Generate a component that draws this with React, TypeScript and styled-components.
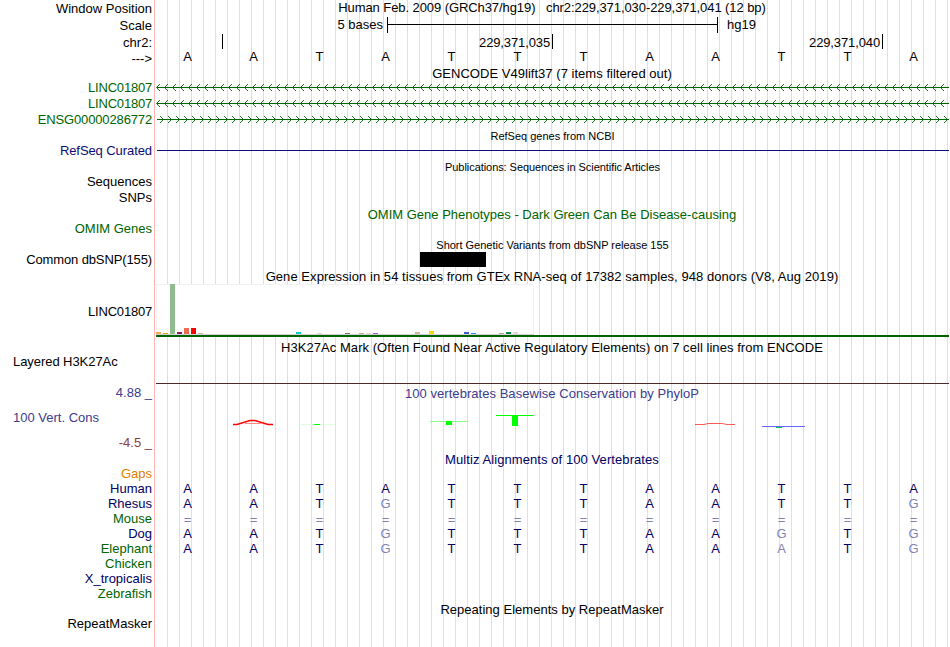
import React from "react";
import styled, { createGlobalStyle } from "styled-components";

const GlobalStyle = createGlobalStyle`
  body {
    margin: 0;
    background: #fff;
  }
`;

const Browser = styled.main`
  width: 949px;
  height: 647px;
  overflow: hidden;
  font: 13px/16px "Liberation Sans", Arial, sans-serif;
  color: #000;
  white-space: pre;
`;

const Row = styled.div<{ $h: number }>`
  display: grid;
  grid-template-columns: 156px 793px;
  height: ${({ $h }) => $h}px;
`;

const Side = styled.div<{ $pad?: number }>`
  box-sizing: border-box;
  width: 155px;
  padding: ${({ $pad = 0 }) => $pad}px 2px 0 0;
  border-right: 1px solid #ffb4b4;
`;

const Label = styled.div<{
  $color?: string;
  $left?: boolean;
  $gap?: number;
  $spacing?: number;
}>`
  color: ${({ $color = "#000" }) => $color};
  text-align: ${({ $left }) => ($left ? "left" : "right")};
  padding-left: ${({ $left }) => ($left ? 13 : 0)}px;
  margin-bottom: ${({ $gap = 0 }) => $gap}px;
  letter-spacing: ${({ $spacing = 0 }) => $spacing}px;
`;

const Track = styled.div`
  min-width: 0;
  background: repeating-linear-gradient(
    to right,
    transparent 0 11px,
    #dcdcf5 11px 12px
  );
`;

const Title = styled.div<{
  $color?: string;
  $small?: boolean;
  $pad?: number;
  $spacing?: number;
}>`
  padding: ${({ $pad = 0 }) => $pad}px ${({ $small }) => ($small ? 0 : 1)}px 0 0;
  text-align: center;
  color: ${({ $color = "#000" }) => $color};
  font-size: ${({ $small }) => ($small ? 11 : 13)}px;
  letter-spacing: ${({ $spacing = 0 }) => $spacing}px;
`;

const ScaleLine = styled.div`
  display: flex;
  height: 16px;
`;

const ScaleText = styled.span`
  width: 227px;
  text-align: right;
  margin-right: 4px;
`;

const ScaleBar = styled.span`
  box-sizing: border-box;
  width: 331px;
  height: 16px;
  margin-right: 9px;
  border: solid #000;
  border-width: 0 1px;
  background: linear-gradient(#000, #000) 0 7px / 100% 1px no-repeat;
`;

const Ruler = styled.div`
  display: flex;
  height: 15px;
  letter-spacing: -0.12px;
`;

const RulerCell = styled.span<{ $w: number }>`
  box-sizing: border-box;
  width: ${({ $w }) => $w}px;
  padding: 1px 2px 0 0;
  text-align: right;
  border-right: 1px solid #000;
`;

const Bases = styled.div`
  display: flex;
  margin-left: -1.5px;
`;

const Base = styled.span<{ $color: string; $down?: boolean }>`
  width: 66px;
  flex: none;
  text-align: center;
  color: ${({ $color }) => $color};
  padding-top: ${({ $down }) => ($down ? 1 : 0)}px;
`;

const SolidLine = styled.div<{ $top: number; $color: string; $left?: number }>`
  height: 1px;
  margin-left: ${({ $left = 0 }) => $left}px;
  background: ${({ $color }) => $color};
  transform: translateY(${({ $top }) => $top}px);
`;

const Drawing = styled.svg`
  display: block;
  overflow: hidden;
`;

const Variant = styled.div`
  width: 66px;
  height: 15px;
  margin-left: 264px;
  background: #000;
`;

const Expression = styled.div`
  height: 51px;
  border-bottom: 2px solid #006400;
`;

const BarBox = styled.div`
  box-sizing: border-box;
  display: flex;
  align-items: flex-end;
  gap: 2px;
  width: 378px;
  height: 51px;
  background: #fff;
  border-bottom: 1px solid #d2d2d2;
  box-shadow: inset 1px 1px #f2f2f2, inset -1px 0 #f2f2f2;
`;

const Bar = styled.span`
  flex: none;
  width: 5px;
`;

const NAVY = "#000064";
const GREEN = "#006400";
const FADED = "#8282b4";
const BLUE = "#3c3c8c";

const tissues: Record<number, [number, string]> = {
  0: [2, "#ffa54f"],
  1: [1, "#ee9a00"],
  2: [50, "#8fbc8f"],
  3: [2, "#8b1c62"],
  4: [6, "#ee6a50"],
  5: [6, "#ff0000"],
  6: [1, "#cdb79e"],
  20: [2, "#00cdcd"],
  23: [1, "#e0d5d2"],
  27: [1, "#8b7355"],
  29: [1, "#cdaa7d"],
  30: [1, "#eed5d2"],
  31: [1, "#b452cd"],
  37: [2, "#cdb79e"],
  39: [3, "#ffd700"],
  44: [2, "#3a5fcd"],
  45: [1, "#1e90ff"],
  49: [1, "#a6a6a6"],
  50: [2, "#008b45"],
  51: [2, "#eed5d2"],
};

const species = [
  { name: "Human", color: NAVY, bases: "AATATTTAATTA" },
  { name: "Rhesus", color: NAVY, bases: "AATGTTTAATTG" },
  { name: "Mouse", color: GREEN, bases: "============" },
  { name: "Dog", color: NAVY, bases: "AATGTTTAAGTG" },
  { name: "Elephant", color: GREEN, bases: "AATGTTTAAATG" },
  { name: "Chicken", color: GREEN, bases: "" },
  { name: "X_tropicalis", color: NAVY, bases: "" },
  { name: "Zebrafish", color: GREEN, bases: "" },
];

const reference = species[0].bases;

const TitleRow = ({ h, children, ...rest }) => (
  <Row $h={h}>
    <Side />
    <Track>
      <Title {...rest}>{children}</Title>
    </Track>
  </Row>
);

const LabelRow = ({ h, label, color = "#000", pad = 0, spacing = 0, children = null }) => (
  <Row $h={h}>
    <Side $pad={pad}>
      <Label $color={color} $spacing={spacing}>
        {label}
      </Label>
    </Side>
    <Track>{children}</Track>
  </Row>
);

const Gene = ({ reverse = false }) => {
  const arrows = Array.from({ length: 99 }, (_, i) =>
    reverse ? `M${i * 8 + 4} 4l3.5 3.5l-3.5 3.5` : `M${i * 8 + 4} 4l-3.5 3.5l3.5 3.5`
  ).join("");
  return (
    <Drawing width="793" height="16">
      <path d={arrows} fill="none" stroke={GREEN} strokeWidth=".9" />
      <rect x="1" y="7" width="792" height="1" fill={GREEN} />
    </Drawing>
  );
};

const Conservation = () => (
  <Drawing width="793" height="30" viewBox="156 402 793 30">
    <path d="M233 424.5H237L250 420.5H255L268 424.5H273" fill="none" stroke="#f00" strokeWidth="1.4" />
    <rect x="245" y="423" width="16" height="1" fill="#f88" />
    <rect x="299" y="424" width="36" height="1" fill="#dfd" />
    <rect x="314" y="424" width="6" height="1" fill="#0f0" />
    <rect x="430" y="421" width="38" height="1" fill="#8f8" />
    <rect x="446" y="421" width="6" height="4" fill="#0f0" />
    <rect x="496" y="415" width="38" height="1" fill="#0f0" />
    <rect x="512" y="415" width="6" height="11" fill="#0f0" />
    <path d="M695 424.5H704L708 423.5H722L727 424.5H735" fill="none" stroke="#f00" strokeOpacity=".65" />
    <path d="M762 426.5H805" stroke="#66f" />
    <rect x="776" y="427" width="6" height="1" fill="#0c3" />
  </Drawing>
);

const App = () => (
  <>
    <GlobalStyle />
    <Browser>
      <Row $h={17}>
        <Side $pad={1}>
          <Label>Window Position</Label>
        </Side>
        <Track>
          <Title $spacing={-0.08}>
            {"Human Feb. 2009 (GRCh37/hg19)   chr2:229,371,030-229,371,041 (12 bp)"}
          </Title>
        </Track>
      </Row>
      <LabelRow h={17} pad={1} label="Scale">
        <ScaleLine>
          <ScaleText>5 bases</ScaleText>
          <ScaleBar />
          <span>hg19</span>
        </ScaleLine>
      </LabelRow>
      <LabelRow h={15} pad={1} label="chr2:">
        <Ruler>
          <RulerCell $w={67} />
          <RulerCell $w={330}>229,371,035</RulerCell>
          <RulerCell $w={330}>229,371,040</RulerCell>
        </Ruler>
      </LabelRow>
      <LabelRow h={17} pad={2} label="--->">
        <Bases>
          {reference.split("").map((base, i) => (
            <Base key={i} $color="#000">
              {base}
            </Base>
          ))}
        </Bases>
      </LabelRow>

      <TitleRow h={14} $spacing={0.03}>GENCODE V49lift37 (7 items filtered out)</TitleRow>
      <LabelRow h={16} label="LINC01807" color={GREEN} spacing={-0.2}>
        <Gene />
      </LabelRow>
      <LabelRow h={16} label="LINC01807" color={GREEN} spacing={-0.2}>
        <Gene />
      </LabelRow>
      <LabelRow h={16} label="ENSG00000286772" color={GREEN} spacing={-0.14}>
        <Gene reverse />
      </LabelRow>

      <TitleRow h={15} $small>RefSeq genes from NCBI</TitleRow>
      <LabelRow h={16} label="RefSeq Curated" color="#0c0c78" spacing={-0.08}>
        <SolidLine $top={7} $left={1} $color="#0c0c78" />
      </LabelRow>

      <TitleRow h={15} $small $spacing={-0.06}>
        Publications: Sequences in Scientific Articles
      </TitleRow>
      <LabelRow h={16} label="Sequences" />
      <LabelRow h={16} label="SNPs" />

      <TitleRow h={15} $pad={1} $color={GREEN}>
        OMIM Gene Phenotypes - Dark Green Can Be Disease-causing
      </TitleRow>
      <LabelRow h={16} label="OMIM Genes" color={GREEN} />

      <TitleRow h={15} $small $spacing={-0.02}>
        Short Genetic Variants from dbSNP release 155
      </TitleRow>
      <LabelRow h={16} label="Common dbSNP(155)" spacing={-0.12}>
        <Variant />
      </LabelRow>

      <TitleRow h={16} $pad={1} $spacing={0.06}>
        Gene Expression in 54 tissues from GTEx RNA-seq of 17382 samples, 948 donors (V8, Aug 2019)
      </TitleRow>
      <LabelRow h={54} pad={20} label="LINC01807" spacing={-0.2}>
        <Expression>
          <BarBox>
            {Array.from({ length: 54 }, (_, i) => {
              const [height, background] = tissues[i] || [0, "none"];
              return <Bar key={i} style={{ height, background }} />;
            })}
          </BarBox>
        </Expression>
      </LabelRow>

      <TitleRow h={16} $pad={2} $spacing={0.05}>
        H3K27Ac Mark (Often Found Near Active Regulatory Elements) on 7 cell lines from ENCODE
      </TitleRow>
      <Row $h={31}>
        <Side>
          <Label $left $spacing={-0.06}>Layered H3K27Ac</Label>
        </Side>
        <Track>
          <SolidLine $top={29} $color="#502828" />
        </Track>
      </Row>

      <Row $h={67}>
        <Side>
          <Label $color={BLUE} $gap={9}>4.88 _</Label>
          <Label $color={BLUE} $gap={9} $left>100 Vert. Cons</Label>
          <Label $color="#8c3c3c">-4.5 _</Label>
        </Side>
        <Track>
          <Title $pad={1} $color={BLUE} $spacing={0.04}>
            100 vertebrates Basewise Conservation by PhyloP
          </Title>
          <Conservation />
        </Track>
      </Row>

      <TitleRow h={14} $color={NAVY} $spacing={0.08}>Multiz Alignments of 100 Vertebrates</TitleRow>
      <LabelRow h={15} label="Gaps" color="#e08000" />
      {species.map(({ name, color, bases }) => (
        <LabelRow key={name} h={15} label={name} color={color}>
          <Bases>
            {bases.split("").map((base, i) => (
              <Base
                key={i}
                $color={base === reference[i] ? NAVY : FADED}
                $down={base === "="}
              >
                {base}
              </Base>
            ))}
          </Bases>
        </LabelRow>
      ))}

      <TitleRow h={15} $pad={1} $spacing={0.02}>Repeating Elements by RepeatMasker</TitleRow>
      <LabelRow h={31} label="RepeatMasker" />
    </Browser>
  </>
);

export default App;
